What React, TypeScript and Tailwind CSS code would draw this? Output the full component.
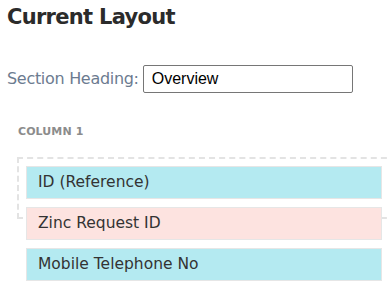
import React from "react";

const items = [
  { label: "ID (Reference)", cls: "bg-[#b4eaf1]" },
  { label: "Zinc Request ID", cls: "bg-[#fde3e0]" },
  { label: "Mobile Telephone No", cls: "bg-[#b4eaf1]" },
];

export default function App() {
  return (
    <div className="w-[387px] h-[282px] overflow-hidden bg-white pl-[7px] font-['DejaVu_Sans',sans-serif]">
      <h1 className="pt-[2px] text-[21px] leading-[30px] font-bold text-[#2b2b2b] tracking-[-0.7px]">Current Layout</h1>
      <div className="mt-[33px] flex items-center">
        <span className="text-[16px] text-[#6c7b90] tracking-[-0.3px]">Section Heading:</span>
        <input
          readOnly
          value="Overview"
          className="ml-[4px] w-[210px] h-[28px] border border-[#767676] rounded-[2px] px-[8px] text-[16px] text-black font-['Liberation_Sans',sans-serif] outline-none"
        />
      </div>
      <div className="mt-[32px] ml-[11px] text-[11px] font-bold text-[#8c8c8c] leading-[14px] tracking-[0.1px]">COLUMN 1</div>
      <div className="mt-[18px] ml-[10px] w-[380px] h-[62px] border-2 border-dashed border-[#e3e3e3] pt-[7px] pl-[7px]">
        <div className="flex flex-col gap-[8px] w-[356px]">
          {items.map((it) => (
            <div
              key={it.label}
              className={`${it.cls} h-[33px] border border-[#e6e6e6] pl-[11px] flex items-center text-[15.5px] text-[#333333]`}
            >
              {it.label}
            </div>
          ))}
        </div>
      </div>
    </div>
  );
}
